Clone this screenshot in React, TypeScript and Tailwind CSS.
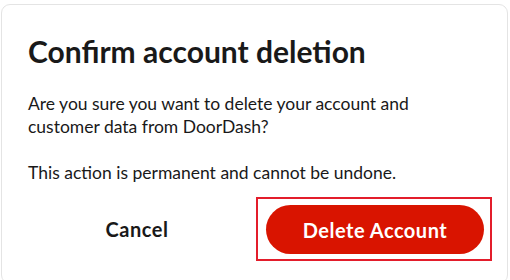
export default function App() {
  return (
    <div className="w-[510px] h-[280px] bg-white pt-[4px] pl-[1px] pr-[2px] font-['Lato',sans-serif] text-[#191919]">
      <div className="h-[280px] rounded-[9px] border border-[#e4e4e4] bg-white pl-[26px] pt-[26px]">
        <h1 className="text-[30px] font-bold leading-[40px]">Confirm account deletion</h1>
        <p className="mt-[21px] w-[400px] text-[17.5px] leading-[23px]">
          Are you sure you want to delete your account and customer data from DoorDash?
        </p>
        <p className="mt-[23px] text-[17.5px] leading-[23px]">This action is permanent and cannot be undone.</p>
        <div className="mt-[13px] flex items-center">
          <button className="h-[49px] w-[218px] rounded-full text-[20px] font-bold tracking-[0.5px] text-[#191919]">
            Cancel
          </button>
          <div className="ml-[10px] border-2 border-[#e31d2b] pb-[5px] pl-[8px] pr-[6px] pt-[6px]">
            <button className="h-[49px] w-[218px] rounded-full bg-[#d91400] text-[20px] font-bold tracking-[0.5px] text-white">
              Delete Account
            </button>
          </div>
        </div>
      </div>
    </div>
  );
}
